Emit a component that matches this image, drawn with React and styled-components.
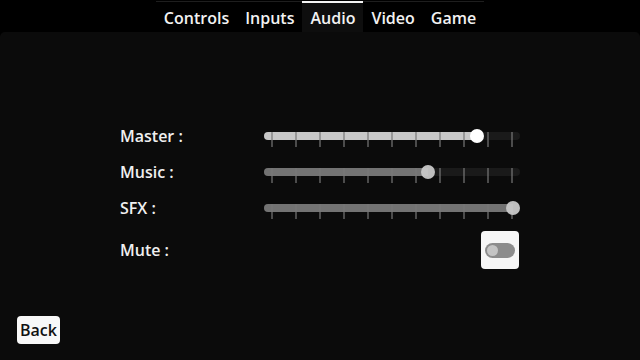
import React, { useState } from "react";
import styled, { createGlobalStyle } from "styled-components";

const GlobalStyle = createGlobalStyle`
  html, body {
    margin: 0;
    padding: 0;
    background: #000;
  }
  body {
    font-family: "Open Sans", "Noto Sans", sans-serif;
  }
`;

const Screen = styled.div`
  width: 640px;
  height: 360px;
  display: flex;
  flex-direction: column;
  background: #000;
  overflow: hidden;
`;

const TabBar = styled.nav`
  align-self: center;
  display: flex;
  height: 31px;
  border-top: 1px solid #1e1e1e;
  margin-top: 1px;
  margin-bottom: -1px;
`;

const Tab = styled.div`
  padding: 0 8px;
  display: flex;
  align-items: center;
  box-sizing: border-box;
  font-size: 16px;
  font-weight: 600;
  color: #f2f2f2;
  margin-top: -1px;
  border-top: 2px solid ${(p) => (p.$active ? "#f4f4f4" : "transparent")};
  background: ${(p) => (p.$active ? "#0e0e0e" : "transparent")};
  height: 32px;
`;

const Panel = styled.main`
  flex: 1;
  background: #0b0b0b;
  border-radius: 5px 5px 0 0;
  display: grid;
  grid-template-rows: 1fr auto 1fr;
`;

const Settings = styled.div`
  grid-row: 2;
  justify-self: center;
  display: grid;
  grid-template-columns: 144px 256px;
  grid-template-rows: repeat(3, 36px) 48px;
`;

const Label = styled.div`
  display: flex;
  align-items: center;
  font-size: 16px;
  font-weight: 600;
  color: #f0f0f0;
`;

const Cell = styled.div`
  display: flex;
  align-items: center;
  justify-content: ${(p) => (p.$end ? "flex-end" : "flex-start")};
`;

const Track = styled.div`
  position: relative;
  width: 256px;
  height: 8px;
  border-radius: 4px;
  background: #1a1a1a;
`;

const Fill = styled.div`
  position: absolute;
  left: 0;
  top: 0;
  bottom: 0;
  border-radius: 4px 0 0 4px;
  background: ${(p) => (p.$focus ? "#c8c8c8" : "#737373")};
`;

const Ticks = styled.div`
  position: absolute;
  left: 7px;
  right: 7px;
  top: 0;
  height: 15px;
  display: flex;
  justify-content: space-between;
  pointer-events: none;
`;

const Tick = styled.span`
  width: 2px;
  height: 100%;
  background: rgba(120, 120, 120, 0.6);
`;

const Thumb = styled.div`
  position: absolute;
  top: 50%;
  width: 14px;
  height: 14px;
  margin: -7px 0 0 -7px;
  border-radius: 50%;
  background: ${(p) => (p.$focus ? "#ffffff" : "rgba(200, 200, 200, 0.95)")};
`;

const ToggleButton = styled.button`
  width: 38px;
  height: 38px;
  margin-right: 1px;
  border: none;
  border-radius: 4px;
  background: #f6f6f6;
  display: flex;
  align-items: center;
  justify-content: center;
  padding: 0;
  cursor: pointer;
`;

const Switch = styled.span`
  width: 30px;
  height: 15px;
  border-radius: 8px;
  background: #8c8c8c;
  display: flex;
  align-items: center;
  padding: 0 2px;
  box-sizing: border-box;
  justify-content: ${(p) => (p.$on ? "flex-end" : "flex-start")};
`;

const Knob = styled.span`
  width: 11px;
  height: 11px;
  border-radius: 50%;
  background: #c4c4c4;
`;

const Footer = styled.div`
  grid-row: 3;
  align-self: end;
  padding: 0 0 16px 17px;
`;

const BackButton = styled.button`
  height: 28px;
  padding: 0 3px;
  border: none;
  border-radius: 4px;
  background: #f8f8f8;
  color: #111;
  font-family: "Open Sans", "Noto Sans", sans-serif;
  font-size: 16px;
  font-weight: 600;
  cursor: pointer;
`;

const tabs = ["Controls", "Inputs", "Audio", "Video", "Game"];

const Slider = ({ value, focus }) => {
  const pos = 7 + (value / 100) * 242;
  return (
    <Track>
      <Fill $focus={focus} style={{ width: `${pos}px` }} />
      <Ticks>
        {Array.from({ length: 11 }).map((_, i) => (
          <Tick key={i} />
        ))}
      </Ticks>
      <Thumb $focus={focus} style={{ left: `${pos}px` }} />
    </Track>
  );
};

const App = () => {
  const [muted, setMuted] = useState(false);
  const volumes = [
    { name: "Master", value: 85, focus: true },
    { name: "Music", value: 65 },
    { name: "SFX", value: 100 },
  ];

  return (
    <Screen>
      <GlobalStyle />
      <TabBar>
        {tabs.map((t) => (
          <Tab key={t} $active={t === "Audio"}>
            {t}
          </Tab>
        ))}
      </TabBar>
      <Panel>
        <Settings>
          {volumes.map((v) => (
            <React.Fragment key={v.name}>
              <Label>{v.name} :</Label>
              <Cell>
                <Slider value={v.value} focus={v.focus} />
              </Cell>
            </React.Fragment>
          ))}
          <Label>Mute :</Label>
          <Cell $end>
            <ToggleButton onClick={() => setMuted(!muted)}>
              <Switch $on={muted}>
                <Knob />
              </Switch>
            </ToggleButton>
          </Cell>
        </Settings>
        <Footer>
          <BackButton>Back</BackButton>
        </Footer>
      </Panel>
    </Screen>
  );
};

export default App;
